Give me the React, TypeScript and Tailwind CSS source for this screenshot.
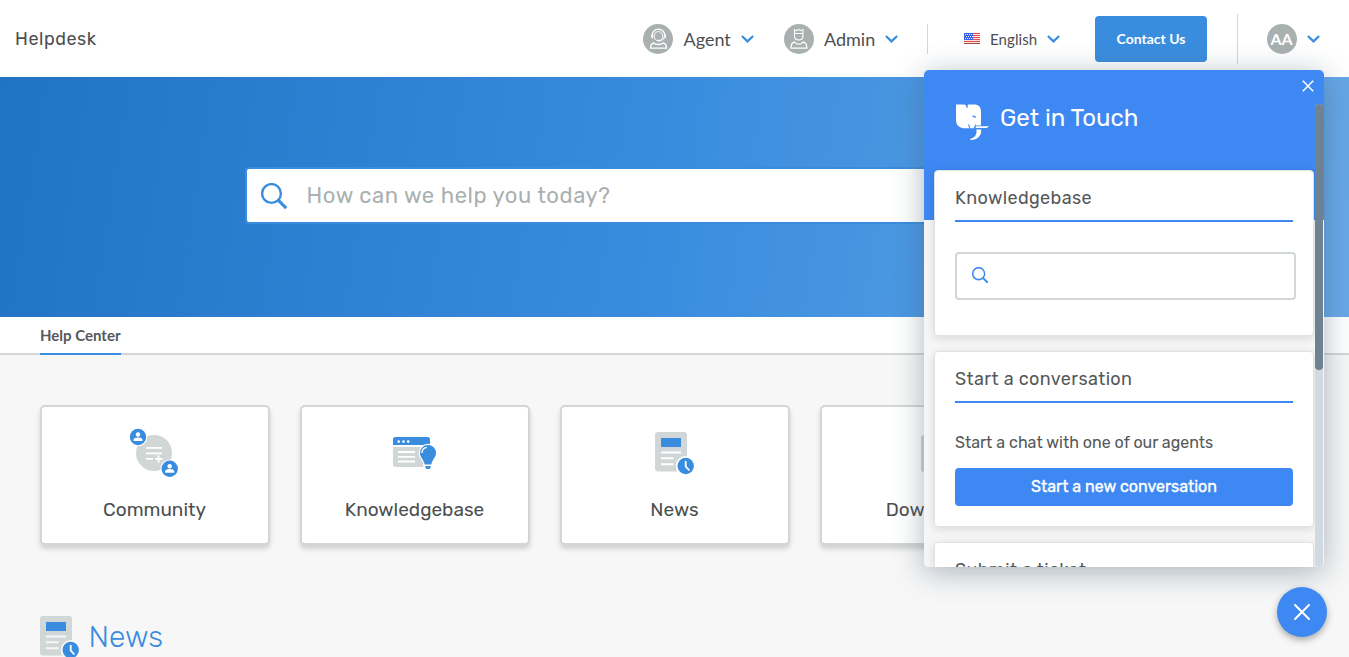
import React from "react";

const rubik = "font-['Rubik','Roboto',sans-serif]";
const lato = "font-['Lato',sans-serif]";

function Chevron({ className = "" }: { className?: string }) {
  return (
    <svg className={`h-2 w-[13px] shrink-0 ${className}`} viewBox="0 0 13 8" fill="none" stroke="#3a8dde" strokeWidth="2.2">
      <path d="M0.9 1 6.5 6.4 12.1 1" />
    </svg>
  );
}

function AgentIcon() {
  return (
    <svg className="h-[30px] w-[30px] shrink-0" viewBox="0 0 30 30" fill="none" stroke="#fff" strokeWidth="1">
      <circle cx="15" cy="15" r="15" fill="#a9b0b0" stroke="none" />
      <path d="M9.2 13.2V11.5a6.3 6.3 0 0 1 12.6 0v1.7" strokeWidth="1.2" />
      <path d="M8.6 10.5v3.4h1.7M22.4 10.5v3.4h-1.7c-.4 1.6-1.5 2.7-3.1 2.9" />
      <path d="M11.1 12a4.4 4.4 0 0 1 8.8 0c0 2.7-1.5 4.6-4.4 4.6s-4.4-1.900-4.400-4.600Z" />
      <path d="M14.500 16.600h3" strokeWidth="1.600" />
      <path d="M10.800 19c1 1.200 2.600 1.500 4.700 1.500s3.700-.3 4.700-1.500c2 .4 3.300 2.300 3.300 5.200h-16c0-2.900 1.300-4.800 3.300-5.200Z" strokeWidth="1.300" />
    </svg>
  );
}

function AdminIcon() {
  return (
    <svg className="h-[30px] w-[30px] shrink-0" viewBox="0 0 30 30" fill="none" stroke="#fff" strokeWidth="1.1">
      <circle cx="15" cy="15" r="15" fill="#a9b0b0" stroke="none" />
      <path d="M10.500 9.500V5.600l2.200 1.100L14.700 5.300l2 1.400 2.200-1.100v6.100c0 2.600-1.600 4.300-4.200 4.300s-4.200-1.700-4.200-4.300V9.500h8.400" />
      <path d="M10.600 18c1 1.600 2.500 2.200 4.200 2.200s3.200-.6 4.200-2.200c2.400.5 3.900 3 3.900 6.200H6.900c0-3.200 1.300-5.700 3.700-6.200Z" strokeWidth="1.300" />
    </svg>
  );
}

function Flag() {
  return (
    <svg className="h-[11px] w-4 shrink-0" viewBox="0 0 16 11" shapeRendering="crispEdges">
      <rect width="16" height="11" fill="#fbe3e3" />
      <path d="M0 .5h16M0 2.500h16M0 4.500h16M0 6.500h16M0 8.500h16" stroke="#f04b4b" />
      <path d="M0 10.500h16" stroke="#a6503f" />
      <rect width="9" height="7" fill="#3a63e6" />
      <path d="M1 1.500h8M2 3.500h7M1 5.500h8" stroke="#dfe8ff" strokeDasharray="1 1" />
    </svg>
  );
}

function Glass({ className, w }: { className: string; w: number }) {
  return (
    <svg className={className} viewBox="0 0 26 26" fill="none" stroke="currentColor" strokeWidth={w}>
      <circle cx="10.500" cy="10.500" r="9.400" />
      <path d="m17.200 17.200 8 8" strokeWidth={w + 0.7} />
    </svg>
  );
}

function Person({ x, y, halo }: { x: number; y: number; halo: string }) {
  return (
    <g>
      <circle cx={x} cy={y} r="9.300" fill={halo} />
      <circle cx={x} cy={y} r="8.200" fill="#3a8dde" />
      <circle cx={x} cy={y - 2.500} r="2.200" fill="#fff" />
      <path d={`M${x - 4.500} ${y + 4}v-1c0-2 2.500-2.600 4.500-2.600s4.500.6 4.500 2.600v1Z`} fill="#fff" />
    </g>
  );
}

function CommunityIcon() {
  return (
    <svg className="mr-[2px] h-[50px] w-[50px]" viewBox="0 0 50 50">
      <circle cx="25" cy="25" r="18" fill="#d1d6d6" />
      <path d="M17 19.800h16M17 25.300h16M17 30.900h7M26 30.900h7.500M29.500 27.200V34.700" stroke="#fff" strokeWidth="1.700" />
      <Person x={9} y={9} halo="#fff" />
      <Person x={40.700} y={40.700} halo="#fff" />
    </svg>
  );
}

function KnowledgeIcon() {
  return (
    <svg className="h-[50px] w-[50px]" viewBox="0 0 50 50">
      <path d="M3 19h37v17.500a2.500 2.500 0 0 1-2.500 2.500h-32A2.500 2.500 0 0 1 3 36.500Z" fill="#d1d6d6" />
      <path d="M3 17v-5.500A2.500 2.500 0 0 1 5.500 9h32a2.500 2.500 0 0 1 2.500 2.500V17Z" fill="#3a8dde" />
      <g fill="#fff">
        <circle cx="8.700" cy="13.600" r="1.300" />
        <circle cx="13.500" cy="13.600" r="1.300" />
        <circle cx="18.200" cy="13.600" r="1.300" />
      </g>
      <path d="M8 24h17M8 28.800h17M8 33.500h17" stroke="#fff" strokeWidth="1.800" />
      <path d="M38 17a8 8 0 0 0-8 8c0 4.500 3 6.500 4.500 9.500v6h7v-6C43 31.500 46 29.500 46 25a8 8 0 0 0-8-8Z" fill="#fff" stroke="#fff" strokeWidth="2.500" />
      <path d="M38 17a8 8 0 0 0-8 8c0 4.500 3.800 6.500 4.700 11.500h6.600C42.200 31.500 46 29.500 46 25a8 8 0 0 0-8-8Z" fill="#3a8dde" />
      <path d="M35.400 38h5.200v1.500l-1 1.500h-3.200l-1-1.500Z" fill="#3a8dde" />
      <path d="M32 25c0-3 1.700-5 4.700-5.600" fill="none" stroke="#fff" strokeWidth="1.400" />
    </svg>
  );
}

function NewsIcon({ halo }: { halo: string }) {
  return (
    <svg className="h-[50px] w-[50px] shrink-0" viewBox="0 0 50 50">
      <rect x="5" y="4" width="32" height="39.500" rx="3" fill="#d1d6d6" />
      <rect x="11" y="10" width="20" height="9" fill="#3a8dde" />
      <path d="M11 24.500h20M11 30.300h12.500M11 36.300h12.500" stroke={halo} strokeWidth="1.900" />
      <circle cx="35.700" cy="38" r="10" fill={halo} />
      <circle cx="35.700" cy="38" r="8.200" fill="#3a8dde" />
      <path d="M35.700 33v5.500l3.700 4" fill="none" stroke="#fff" strokeWidth="1.800" />
    </svg>
  );
}

function DownloadsIcon() {
  return (
    <svg className="h-[50px] w-[50px]" viewBox="0 0 50 50">
      <rect x="11" y="7" width="30" height="37" rx="3" fill="#d1d6d6" />
    </svg>
  );
}

function Tile({ label, children }: { label: string; children: React.ReactNode }) {
  return (
    <div className="flex h-[140px] w-[230px] shrink-0 flex-col items-center rounded-[5px] border-2 border-[#d1d6d6] bg-white pt-[21px] shadow-[0_4px_5px_rgba(0,0,0,0.16)]">
      {children}
      <span className={`mt-5 pr-px text-[19px] leading-6 whitespace-nowrap text-[#4c4f50] ${rubik}`}>{label}</span>
    </div>
  );
}

function Header() {
  return (
    <header className="flex h-[77px] items-center bg-white text-[#4c4f50]">
      <div className={`mt-0.5 ml-[15px] w-[628px] text-[18px] tracking-[0.55px] ${rubik}`}>Helpdesk</div>
      <div className={`flex w-[141px] items-center text-[18px] ${lato}`}>
        <AgentIcon />
        <span className="mt-0.5 ml-[10.500px] w-[57.500px]">Agent</span>
        <Chevron />
      </div>
      <div className={`flex w-[143px] items-center text-[18px] ${lato}`}>
        <AdminIcon />
        <span className="mt-0.5 ml-[10px] w-[61px]">Admin</span>
        <Chevron />
      </div>
      <div className="h-[30px] w-px bg-[#d1d6d6]" />
      <div className={`ml-9 flex w-[131px] items-center text-[15px] ${lato}`}>
        <Flag />
        <span className="mt-px ml-[10px] w-[57px] tracking-[0.1px]">English</span>
        <Chevron />
      </div>
      <button className={`h-[46px] w-28 rounded-[4px] bg-[#3a8dde] text-[14px] font-bold text-white ${lato}`}>Contact Us</button>
      <div className="ml-[30px] h-[50px] w-px bg-[#d1d6d6]" />
      <div className={`ml-[29px] flex h-[30px] w-[30px] items-center justify-center rounded-full bg-[#a9b0b0] pr-px text-[16px] font-bold text-white ${lato}`}>AA</div>
      <Chevron className="ml-[9.500px]" />
    </header>
  );
}

function WidgetCard({ title, height, children }: { title: string; height: string; children?: React.ReactNode }) {
  return (
    <section className={`w-[380px] shrink-0 rounded-[4px] border border-[#e0e2e3] bg-white px-5 pt-[15px] shadow-[0_2px_10px_rgba(0,0,0,0.13)] ${height}`}>
      <h3 className="h-9 w-[338px] border-b-2 border-[#3e88f3] text-[18px] leading-6 font-normal tracking-[0.37px]">{title}</h3>
      {children}
    </section>
  );
}

function Widget() {
  return (
    <aside className={`absolute top-[70px] left-[924px] h-[497px] w-[400px] rounded-[5px] text-[#555859] shadow-[0_5px_30px_rgba(70,95,115,0.45)] ${rubik}`}>
      <div className="flex h-full flex-col overflow-hidden rounded-[5px] bg-[linear-gradient(#3e88f3_150px,#f6f6f6_150px)]">
        <div className="flex h-[100px] shrink-0 items-start">
          <svg className="mt-8 ml-[31px] h-10 w-9" viewBox="0 0 36 40">
            <path d="M1 2.600H9C10.600 2.600 11.400 3.600 11.300 5.200L12.300 6.200 12.700 5V3.200C12.700 2.600 13.200 2.500 14 2.500H19C23.500 2.500 26 5 26 9.500V23.500H21.500L19.500 26.300H10C4.500 26.300 1 23.200 1 18Z" fill="#fff" />
            <path d="M16.800 14.200C18.300 13.100 20.600 13.400 21.200 15.800 19.700 16 18.800 14.600 16.800 14.200Z" fill="#3e88f3" />
            <path d="M13.600 22.300 14.800 26.600M20.800 22.800 19 26.600" stroke="#3e88f3" strokeWidth="1.100" />
            <path d="M21.200 24.300H34.100L31.700 26H20.600ZM21.300 27.600H26.200C26.700 33.600 22.800 38.200 15.200 38.100V36.900C19.200 36.300 22.500 32.900 21.300 27.600Z" fill="#fff" />
          </svg>
          <h2 className="mt-8 ml-[9px] w-[220px] text-[24px] leading-8 font-normal text-white">Get in Touch</h2>
          <svg className="mt-[10px] ml-[82px] h-3 w-3" viewBox="0 0 12 12" stroke="#fff" strokeWidth="1.500">
            <path d="m.8.800 10.400 10.400M11.200.800.800 11.200" />
          </svg>
        </div>
        <div className="ml-[10px] flex flex-col gap-[15px]">
          <WidgetCard title="Knowledgebase" height="h-[166px]">
            <div className="mt-[30px] flex h-12 w-[341px] items-start rounded-[4px] border-2 border-[#d1d6d6] pt-[12.500px] pl-[14.500px] text-[#3e88f3]">
              <Glass className="h-[16.500px] w-[16.500px]" w={2.400} />
            </div>
          </WidgetCard>
          <WidgetCard title="Start a conversation" height="h-[176px]">
            <p className="mt-[28px] text-[16px] leading-6 whitespace-nowrap">Start a chat with one of our agents</p>
            <button className="mt-[13px] h-[38px] w-[338px] rounded-[4px] bg-[#3e88f3] text-[16px] font-normal text-white [-webkit-text-stroke:0.35px_white]">Start a new conversation</button>
          </WidgetCard>
          <WidgetCard title="Submit a ticket" height="h-[176px]" />
        </div>
      </div>
      <div className="absolute top-[34px] left-[391px] h-[463px] w-2 rounded-[4px] bg-[#d1dae1]">
        <div className="h-[266px] rounded-[4px] bg-[#6e8292]" />
      </div>
    </aside>
  );
}

export default function App() {
  return (
    <div className="relative h-[657px] w-[1349px] overflow-hidden bg-[#f7f7f7]">
      <Header />
      <div className="flex h-[240px] items-center bg-[linear-gradient(99deg,#2173c4_0%,#3a8dde_50%,#68a8e8_100%)] pl-[245px]">
        <div className="-mt-1 flex h-[57px] w-[858px] items-center rounded-[4px] border-2 border-[#3a8dde] bg-white text-[#3a8dde]">
          <Glass className="mt-px ml-[14px] h-[26px] w-[26px]" w={2.400} />
          <span className={`mt-0.5 ml-[19.500px] text-[22px] leading-8 tracking-[0.55px] text-[#a9b0b0] ${rubik}`}>How can we help you today?</span>
        </div>
      </div>
      <nav className="flex h-[38px] border-b-2 border-[#d1d6d6] bg-white pl-10">
        <span className={`h-[38px] w-[81px] border-b-2 border-[#3a8dde] text-[15px] leading-[37px] font-bold whitespace-nowrap text-[#55585a] ${lato}`}>Help Center</span>
      </nav>
      <main>
        <div className="flex gap-[30px] pt-[50px] pl-10">
          <Tile label="Community"><CommunityIcon /></Tile>
          <Tile label="Knowledgebase"><KnowledgeIcon /></Tile>
          <Tile label="News"><NewsIcon halo="#fff" /></Tile>
          <Tile label="Downloads"><DownloadsIcon /></Tile>
        </div>
        <div className="mt-[67px] flex pl-[35px]">
          <NewsIcon halo="#f7f7f7" />
          <h2 className={`ml-[3.500px] pt-[5px] text-[30px] leading-10 font-light text-[#3a8dde] ${rubik}`}>News</h2>
        </div>
      </main>
      <Widget />
      <button aria-label="Close" className="absolute top-[587px] left-[1277px] flex h-[50px] w-[50px] items-center justify-center rounded-full bg-[#3e88f3] shadow-[0_3px_7px_rgba(0,0,0,0.32)]">
        <svg className="h-4 w-4" viewBox="0 0 16 16" stroke="#fff" strokeWidth="2" strokeLinecap="round">
          <path d="m1 1 14 14M15 1 1 15" />
        </svg>
      </button>
    </div>
  );
}
